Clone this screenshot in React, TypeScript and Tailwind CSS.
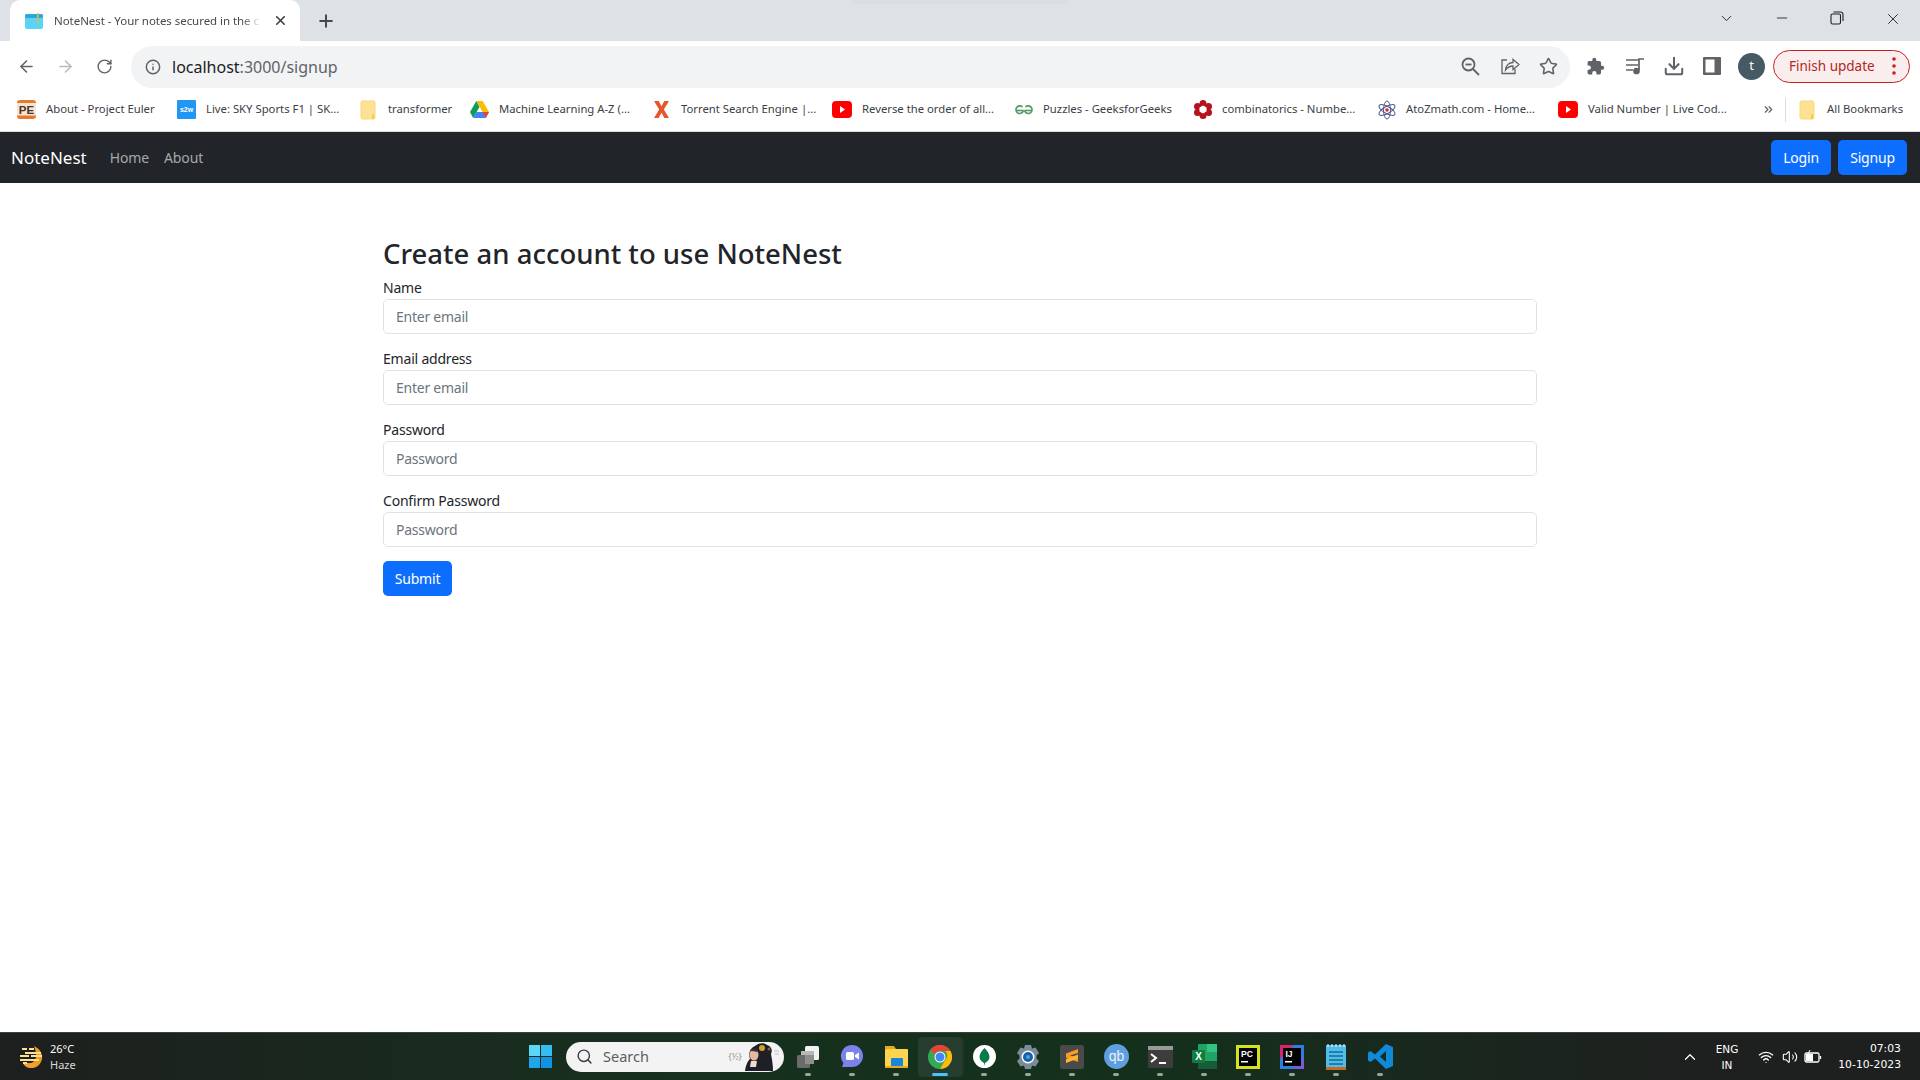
import React from "react";
import { ArrowLeft, ArrowRight, RotateCw, Info, Star, Download, ChevronDown, ChevronUp, Minus, X, Plus, Search, Wifi, Volume2, ChevronsRight } from "lucide-react";

const ui = "font-['Noto_Sans','Open_Sans',sans-serif]";

function Folder() {
  return (
    <svg width="16" height="20" viewBox="0 0 16 20">
      <path d="M1 2.500a1.500 1.500 0 0 1 1.500-1.500h11a1.500 1.500 0 0 1 1.500 1.500v15a1.500 1.500 0 0 1-1.500 1.500h-11a1.500 1.500 0 0 1-1.500-1.500z" fill="#fde293" stroke="#f9d976" />
      <path d="M12 19v-4a1 1 0 0 1 2 0v4z" fill="#f6c84c" />
    </svg>
  );
}
function PE() {
  return (
    <svg width="19" height="19" viewBox="0 0 19 19">
      <rect width="19" height="19" rx="3" fill="#e8782c" />
      <rect y="3" width="19" height="12.500" fill="#f6e5d5" />
      <text x="9.500" y="14" textAnchor="middle" fontSize="11.500" fontWeight="800" fontFamily="Liberation Sans" fill="#4b3327">PE</text>
    </svg>
  );
}
function S2W() {
  return (
    <svg width="19" height="19" viewBox="0 0 19 19">
      <rect width="19" height="19" rx="1" fill="#2196f3" />
      <text x="9.500" y="12" textAnchor="middle" fontSize="7" fontWeight="700" fontFamily="Liberation Sans" fill="#fff">s2w</text>
    </svg>
  );
}
function Drive() {
  return (
    <svg width="19" height="17" viewBox="0 0 19 17">
      <path d="M6.300 0h6.400l6.300 11h-6.400z" fill="#fbbc04" />
      <path d="M6.300 0L0 11l3.200 6 6.300-11z" fill="#0f9d58" />
      <path d="M3.200 17L6.400 11H19l-3.200 6z" fill="#4285f4" />
      <path d="M12.600 11H19l-3.200 6z" fill="#ea4335" />
    </svg>
  );
}
function XLogo() {
  return (
    <svg width="15" height="17" viewBox="0 0 16 18">
      <path d="M0 0h5l3 5.500L11 0h5l-5.500 9 5.500 9h-5l-3-5.500L5 18H0l5.500-9z" fill="#e5562a" />
    </svg>
  );
}
function YT() {
  return (
    <svg width="20" height="17" viewBox="0 0 20 17">
      <rect width="20" height="17" rx="4" fill="#ff0000" />
      <path d="M8 5l5 3.500-5 3.500z" fill="#fff" />
    </svg>
  );
}
function GfG() {
  return (
    <svg width="18" height="12" viewBox="0 0 18 12" fill="none" stroke="#4f9a61" strokeWidth="1.600">
      <path d="M8.500 6.500H1.200" />
      <path d="M9.500 6.500h7.300" />
      <path d="M7.500 3A3.800 3.800 0 1 0 8.500 6.500" />
      <path d="M10.500 3A3.800 3.800 0 1 1 9.500 6.500" />
    </svg>
  );
}
function Combi() {
  return (
    <svg width="18" height="19" viewBox="0 0 18 19">
      <g fill="#b5121b">
        <circle cx="9" cy="3.500" r="3.500" />
        <circle cx="9" cy="15.500" r="3.500" />
        <circle cx="3.500" cy="6.500" r="3.500" />
        <circle cx="14.500" cy="6.500" r="3.500" />
        <circle cx="3.500" cy="12.500" r="3.500" />
        <circle cx="14.500" cy="12.500" r="3.500" />
      </g>
      <path d="M9 5.500l3.500 2v4l-3.500 2-3.500-2v-4z" fill="#fff" />
    </svg>
  );
}
function Atom() {
  return (
    <svg width="18" height="20" viewBox="0 0 18 20" fill="none" stroke="#53598f" strokeWidth="1">
      <ellipse cx="9" cy="10" rx="3.500" ry="9" />
      <ellipse cx="9" cy="10" rx="3.500" ry="9" transform="rotate(60 9 10)" />
      <ellipse cx="9" cy="10" rx="3.500" ry="9" transform="rotate(-60 9 10)" />
      <circle cx="9" cy="10" r="1.700" fill="#d3222a" stroke="none" />
    </svg>
  );
}

const bookmarks = [
  { icon: <PE />, t: "About - Project Euler", c: "w-[160px] pl-[17px]", g: "w-[29px]" },
  { icon: <S2W />, t: "Live: SKY Sports F1 | SK...", c: "w-[183px] pl-[17px]", g: "w-[29px]" },
  { icon: <Folder />, t: "transformer", c: "w-[110px] pl-[17px]", g: "w-[28px]" },
  { icon: <Drive />, t: "Machine Learning A-Z (...", c: "w-[185px] pl-[17px]", g: "w-[29px]" },
  { icon: <XLogo />, t: "Torrent Search Engine |...", c: "w-[178px] pl-[16px]", g: "w-[27px]" },
  { icon: <YT />, t: "Reverse the order of all...", c: "w-[182px] pl-[16px]", g: "w-[30px]" },
  { icon: <GfG />, t: "Puzzles - GeeksforGeeks", c: "w-[179px] pl-[17px]", g: "w-[28px]" },
  { icon: <Combi />, t: "combinatorics - Numbe...", c: "w-[184px] pl-[17px]", g: "w-[28px]" },
  { icon: <Atom />, t: "AtoZmath.com - Home...", c: "w-[180px] pl-[17px]", g: "w-[28px]" },
  { icon: <YT />, t: "Valid Number | Live Cod...", c: "w-[192px] pl-[17px]", g: "w-[30px]" },
];

function Field({ label, placeholder, type, last }: { label: string; placeholder: string; type: string; last?: boolean }) {
  return (
    <div className={last ? "mb-[14px]" : "mb-[12px]"}>
      <label className="block h-[24px] pt-[1px] text-[14px] leading-[24px] tracking-[-0.2px] text-[#212529]">{label}</label>
      <input
        type={type}
        placeholder={placeholder}
        className="block h-[35px] w-full rounded-[5px] border border-[#dee2e6] bg-white px-[12px] pb-[1px] text-[14px] tracking-[-0.25px] text-[#212529] placeholder:text-[#6c757d] outline-none"
      />
    </div>
  );
}

function TaskIcon({ children, active }: { children: React.ReactNode; active?: boolean }) {
  return (
    <div className={`relative flex h-[40px] w-[44px] shrink-0 items-center justify-center ${active ? "rounded-[4px] bg-[#263d30] shadow-[3px_0_0_-1px_#1f3528]" : ""}`}>
      {children}
      <div className={`absolute bottom-[1px] h-[3px] rounded-full ${active ? "w-[16px] bg-[#4cc2ff]" : "w-[6px] bg-[#9aa39d]"}`} />
    </div>
  );
}

export default function App() {
  return (
    <div className={`flex h-[1080px] w-[1920px] flex-col overflow-hidden bg-white ${ui}`}>
      {/* tab strip */}
      <div className="relative flex h-[41px] shrink-0 items-end bg-[#dee1e6]">
        <div className="absolute left-[850px] top-0 h-[4px] w-[220px] rounded-b-full bg-[#dadde2]" />
        <div className="ml-[10px] flex h-[41px] w-[290px] items-center rounded-t-[10px] bg-white pl-[15px]">
          <svg width="18" height="16" viewBox="0 0 18 16">
            <rect y="1" width="18" height="15" rx="2" fill="#5bd3f5" />
            <rect y="1" width="18" height="4" rx="1.500" fill="#29a9d8" />
            <rect x="12" y="0" width="1.500" height="10" fill="#e8b93a" />
          </svg>
          <span className="ml-[11px] w-[208px] whitespace-nowrap text-[11.500px] tracking-[-0.05px] text-[#45494e] [mask-image:linear-gradient(to_right,black_90%,transparent)]">
            NoteNest - Your notes secured in the c
          </span>
          <X size={15} strokeWidth={2.600} className="ml-[11px] text-[#3c4043]" />
        </div>
        <div className="ml-[16px] flex h-[41px] items-center">
          <Plus size={20} strokeWidth={2.400} className="text-[#45494e]" />
        </div>
        <div className="flex-1" />
        <div className="flex h-[41px] items-start pt-[10px] text-[#202124]">
          <ChevronDown size={17} strokeWidth={1.300} className="mr-[39px]" />
          <Minus size={16} strokeWidth={1.300} className="mr-[40px]" />
          <svg width="14" height="14" viewBox="0 0 14 14" fill="none" stroke="#202124" strokeWidth="1.100" className="mr-[40px] mt-[1px]">
            <rect x="1" y="3" width="9.500" height="10" rx="1.500" />
            <path d="M3.500 1h7a2.500 2.500 0 0 1 2.500 2.500V10" />
          </svg>
          <X size={18} strokeWidth={1.200} className="mr-[18px]" />
        </div>
      </div>

      {/* toolbar */}
      <div className="flex h-[47px] shrink-0 items-end">
        <div className="flex h-[42px] w-[131px] shrink-0 items-center pb-[1px] pl-[17px]">
          <ArrowLeft size={19} className="text-[#5f6368]" />
          <ArrowRight size={19} className="ml-[20px] text-[#b9bbbe]" />
          <RotateCw size={17} className="ml-[21px] text-[#5f6368]" />
        </div>
        <div className="flex h-[42px] w-[1439px] shrink-0 items-center rounded-full bg-[#f1f3f4] pl-[14px]">
          <Info size={16} strokeWidth={2.200} className="text-[#5f6368]" />
          <span className="ml-[11px] text-[16px] text-[#5f6368]">
            <span className="text-[#202124]">localhost</span>:3000/signup
          </span>
          <div className="flex-1" />
          <div className="mb-[2px] flex items-center">
            <ZoomOutIcon />
            <svg width="20" height="20" viewBox="0 0 20 20" fill="none" stroke="#5f6368" strokeWidth="1.300" className="ml-[20px]">
              <path d="M7 4H2v13.500h13V13" />
              <path d="M5.500 14c.5-4.500 3.500-7.500 7.500-7.500V3.500L19 8.500 13 13.500V10c-3 0-5.500 1.500-7.500 4z" />
            </svg>
            <Star size={19} strokeWidth={2} className="ml-[19px] text-[#5f6368]" />
          </div>
          <div className="w-[12px]" />
        </div>
        <div className="flex h-[42px] flex-1 items-center pb-[2px] pl-[16px]">
          <svg width="19" height="19" viewBox="0 0 24 24" fill="#5f6368">
            <path d="M20.500 11H19V7a2 2 0 0 0-2-2h-4V3.500a2.500 2.500 0 0 0-5 0V5H4a2 2 0 0 0-2 2v3.800h1.500a2.700 2.700 0 0 1 0 5.400H2V20a2 2 0 0 0 2 2h3.800v-1.500a2.700 2.700 0 0 1 5.400 0V22H17a2 2 0 0 0 2-2v-4h1.500a2.500 2.500 0 0 0 0-5z" />
          </svg>
          <svg width="20" height="18" viewBox="0 0 20 18" fill="none" stroke="#5f6368" strokeWidth="1.700" className="ml-[20px]">
            <path d="M1 3h12M1 8h12M1 13h7" />
            <path d="M14 13V2h5" />
            <circle cx="11.500" cy="14" r="2.500" fill="#5f6368" />
          </svg>
          <Download size={22} strokeWidth={2.200} className="ml-[18px] text-[#5f6368]" />
          <svg width="18" height="18" viewBox="0 0 18 18" className="ml-[18px]">
            <rect width="18" height="18" rx="1" fill="#5f6368" />
            <rect x="2.500" y="2.500" width="9" height="13" fill="#fff" />
          </svg>
          <div className="ml-[17px] flex h-[27px] w-[27px] items-center justify-center rounded-full bg-[#455a64] text-[13px] text-white">t</div>
          <div className="ml-[8px] flex h-[33px] w-[137px] items-center rounded-full border border-[#c5221f] bg-[#faeded] pl-[15px] text-[13.500px] text-[#b3261e]">
            Finish update
            <svg width="4" height="18" viewBox="0 0 4 18" className="ml-[17px]" fill="#c5221f">
              <circle cx="2" cy="2" r="1.800" />
              <circle cx="2" cy="9" r="1.800" />
              <circle cx="2" cy="16" r="1.800" />
            </svg>
          </div>
        </div>
      </div>

      {/* bookmarks */}
      <div className="flex h-[44px] shrink-0 items-center border-b border-[#dadce0]">
        {bookmarks.map((b) => (
          <div key={b.t + b.c} className={`flex shrink-0 items-center ${b.c}`}>
            <div className={`flex shrink-0 items-center ${b.g}`}>{b.icon}</div>
            <span className="whitespace-nowrap text-[11.300px] text-[#3c4043]">{b.t}</span>
          </div>
        ))}
        <ChevronsRight size={13} strokeWidth={2.200} className="ml-[29px] text-[#5f6368]" />
        <div className="ml-[10px] h-[24px] w-px bg-[#dadce0]" />
        <div className="ml-[13px]"><Folder /></div>
        <span className="ml-[12px] whitespace-nowrap text-[11.300px] text-[#3c4043]">All Bookmarks</span>
      </div>

      {/* navbar */}
      <nav className="flex h-[51px] shrink-0 items-center bg-[#212529] pl-[11px] pr-[13px]">
        <span className="text-[17px] text-white">NoteNest</span>
        <span className="ml-[23px] text-[14px] tracking-[-0.15px] text-[#a6a8aa]">Home</span>
        <span className="ml-[15px] text-[14px] tracking-[-0.1px] text-[#a6a8aa]">About</span>
        <div className="flex-1" />
        <button className="h-[35px] w-[60px] rounded-[5px] bg-[#0d6efd] text-[14px] tracking-[-0.2px] text-white">Login</button>
        <button className="ml-[7px] h-[35px] w-[69px] rounded-[5px] bg-[#0d6efd] text-[14px] tracking-[-0.2px] text-white">Signup</button>
      </nav>

      {/* page */}
      <main className="flex-1 bg-white">
        <div className="mx-auto w-[1154px] pt-[51px]">
          <h2 className="mb-[1px] h-[40px] text-[27.500px] font-medium leading-[40px] text-[#212529]">Create an account to use NoteNest</h2>
          <Field label="Name" placeholder="Enter email" type="text" />
          <Field label="Email address" placeholder="Enter email" type="email" />
          <Field label="Password" placeholder="Password" type="password" />
          <Field label="Confirm Password" placeholder="Password" type="password" last />
          <button className="h-[35px] w-[69px] rounded-[5px] bg-[#0d6efd] text-[14px] tracking-[-0.2px] text-white">Submit</button>
        </div>
      </main>

      {/* taskbar */}
      <footer className="flex h-[48px] shrink-0 items-center border-t border-[#3a423d] bg-[linear-gradient(to_right,#1d1f1e,#17301f_35%,#14301c_60%,#1e201f_88%)] text-white">
        <div className="flex w-[518px] shrink-0 items-center pl-[20px]">
          <svg width="23" height="22" viewBox="0 0 23 22">
            <path d="M14 0c6 3 9 8 8 13-1 5-5 9-10 9-4 0-8-2-9-5h6c4 0 6-2 7-6 .5-3-.5-7-2-11z" fill="#f09a20" />
            <path d="M3 17h15c-1.500 3-4 5-7 5-3.500 0-6.500-2-8-5z" fill="#f0a02c" />
            <path d="M2 3h5M9 3h5M5 7h16M0 10h9M11 10h11M0 14h19M3 17h4" stroke="#ffdf94" strokeWidth="2" />
          </svg>
          <div className="ml-[7px] text-[11px] leading-[16px]">
            <div>26°C</div>
            <div className="text-[#d7dad8]">Haze</div>
          </div>
        </div>
        <div className="flex h-[40px] w-[44px] shrink-0 items-center justify-center">
          <svg width="23" height="23" viewBox="0 0 23 23">
            <rect width="11" height="11" fill="#5bd6f8" />
            <rect x="12" width="11" height="11" fill="#35bdf2" />
            <rect y="12" width="11" height="11" fill="#1fa5ea" />
            <rect x="12" y="12" width="11" height="11" fill="#1193e4" />
          </svg>
        </div>
        <div className="ml-[4px] flex h-[30px] w-[218px] shrink-0 items-center rounded-full bg-[#f3f3f3] pl-[10px] text-[#3c3c3c]">
          <Search size={17} strokeWidth={2} />
          <span className="ml-[10px] text-[14.500px] text-[#5d5d5d]">Search</span>
          <div className="flex-1" />
          <span className="mr-[1px] text-[9px] text-[#999]">{"{½}"}</span>
          <svg width="38" height="29" viewBox="0 0 38 29" className="mr-[3px]">
            <path d="M2 29c1-7 3-10 5-12-2-5 0-11 5-13 3-3 9-4 12-1 4 1 6 5 4 9 1 5 2 11 2 17z" fill="#1e1f27" />
            <ellipse cx="11" cy="13" rx="4.500" ry="5.500" fill="#e4b8a2" />
            <path d="M7 9c2-3 6-3 8-1l-1 2c-2-1-5-1-7-1z" fill="#40302b" />
            <path d="M8 19h6l-1 6H7z" fill="#ecdcd3" />
            <circle cx="19" cy="6" r="3" fill="#c9a52f" />
            <circle cx="26" cy="7" r="1.500" fill="#7d6a33" />
            <path d="M31 9h5M32 12h4" stroke="#bbb" strokeWidth="1" />
          </svg>
        </div>
        <div className="ml-[2px] flex items-center">
          <TaskIcon>
            <svg width="24" height="24" viewBox="0 0 24 24">
              <rect x="9" y="1" width="14" height="14" rx="1.500" fill="#f2f2f2" />
              <rect x="5" y="6" width="13" height="13" fill="#b8b8b8" />
              <rect x="1" y="10" width="13" height="13" rx="1.500" fill="#6b6b6b" />
              <rect x="9" y="10" width="9" height="9" fill="#8f8f8f" />
            </svg>
          </TaskIcon>
          <TaskIcon>
            <svg width="24" height="26" viewBox="0 0 24 26">
              <path d="M12 1a11 11 0 0 1 0 22H2l1.500-4A11 11 0 0 1 12 1z" fill="#7b83eb" />
              <rect x="6" y="8" width="8" height="8" rx="1.500" fill="#fff" />
              <path d="M15 11l4-2.500v7L15 13z" fill="#fff" />
            </svg>
          </TaskIcon>
          <TaskIcon>
            <svg width="25" height="24" viewBox="0 0 25 24">
              <path d="M1 1h9l2 3h-11z" fill="#e8a91a" />
              <rect x="1" y="4" width="23" height="19" rx="1" fill="#ffd44f" />
              <rect x="7" y="13" width="12" height="10" rx="1" fill="#1687d9" />
              <rect x="1" y="21" width="23" height="2" fill="#e8a91a" />
            </svg>
          </TaskIcon>
          <TaskIcon active>
            <svg width="24" height="24" viewBox="0 0 24 24">
              <circle cx="12" cy="12" r="12" fill="#34a853" />
              <path d="M12 0a12 12 0 0 1 10.400 6H12a6 6 0 0 0-5.400 3.400L2.500 4.600A12 12 0 0 1 12 0z" fill="#ea4335" />
              <path d="M22.400 6A12 12 0 0 1 12 24l5.200-9a6 6 0 0 0 0-9z" fill="#fbbc05" />
              <circle cx="12" cy="12" r="5.500" fill="#fff" />
              <circle cx="12" cy="12" r="4.500" fill="#4285f4" />
            </svg>
          </TaskIcon>
          <TaskIcon>
            <svg width="23" height="23" viewBox="0 0 23 23">
              <circle cx="11.500" cy="11.500" r="11.500" fill="#fff" />
              <path d="M11.500 3c3 3 5 6 5 9 0 3-2.500 5-4.500 6l-.500 3-.500-3c-2-1-4.500-3-4.500-6 0-3 2-6 5-9z" fill="#0b7a4b" />
            </svg>
          </TaskIcon>
          <TaskIcon>
            <svg width="24" height="24" viewBox="0 0 24 24">
              <path d="M9 0h6l1 3.500 3.500-1L23 8l-2.500 2.500V13.500L23 16l-3.500 5.500-3.500-1L15 24H9l-1-3.500-3.500 1L1 16l2.500-2.500V10.500L1 8l3.500-5.500 3.500 1z" fill="#7c8b98" />
              <circle cx="12" cy="12" r="6.500" fill="#fff" />
              <circle cx="12" cy="12" r="5" fill="#1561a8" />
              <circle cx="12" cy="12" r="2" fill="#4e9ee0" />
            </svg>
          </TaskIcon>
          <TaskIcon>
            <svg width="24" height="24" viewBox="0 0 24 24">
              <rect width="24" height="24" rx="2" fill="#4a4a4a" />
              <path d="M18 4L6 8.500v4L18 17v-4L10 10.500 18 8z" fill="#f89b27" />
              <path d="M18 9.500L6 14v4l12-4.500z" fill="#fdb52c" />
            </svg>
          </TaskIcon>
          <TaskIcon>
            <svg width="25" height="25" viewBox="0 0 25 25">
              <circle cx="12.500" cy="12.500" r="12.500" fill="#5f9fe0" />
              <text x="12.500" y="17" textAnchor="middle" fontSize="14" fontFamily="Liberation Sans" fill="#e8f2fb">qb</text>
            </svg>
          </TaskIcon>
          <TaskIcon>
            <svg width="25" height="22" viewBox="0 0 25 22">
              <rect width="25" height="22" rx="1.500" fill="#3d3d3d" />
              <rect width="25" height="4" fill="#9a9a9a" />
              <path d="M3 8l5 4-5 4" fill="none" stroke="#fff" strokeWidth="2" />
              <path d="M11 17h7" stroke="#fff" strokeWidth="2" />
            </svg>
          </TaskIcon>
          <TaskIcon>
            <svg width="25" height="25" viewBox="0 0 25 25">
              <rect x="6" y="0" width="19" height="25" rx="1" fill="#21a366" />
              <rect x="15" y="0" width="10" height="8" fill="#33c481" />
              <rect x="6" y="17" width="19" height="8" fill="#185c37" />
              <rect x="0" y="6" width="13" height="13" rx="1" fill="#107c41" />
              <text x="6.500" y="16" textAnchor="middle" fontSize="10" fontWeight="700" fontFamily="Liberation Sans" fill="#fff">X</text>
            </svg>
          </TaskIcon>
          <TaskIcon>
            <svg width="24" height="24" viewBox="0 0 24 24">
              <rect width="24" height="24" fill="#d7e022" />
              <rect x="3" y="3" width="18" height="18" fill="#000" />
              <text x="5" y="12" fontSize="8.500" fontWeight="700" fontFamily="Liberation Sans" fill="#fff">PC</text>
              <rect x="5" y="16" width="7" height="1.500" fill="#fff" />
            </svg>
          </TaskIcon>
          <TaskIcon>
            <svg width="24" height="24" viewBox="0 0 24 24">
              <rect width="24" height="24" fill="#2f7de0" />
              <path d="M0 0h14L0 14z" fill="#d6246e" />
              <path d="M24 24H12L24 12z" fill="#7c5cd6" />
              <rect x="3" y="3" width="18" height="18" fill="#000" />
              <text x="5.500" y="12" fontSize="8.500" fontWeight="700" fontFamily="Liberation Sans" fill="#fff">IJ</text>
              <rect x="5" y="16" width="7" height="1.500" fill="#fff" />
            </svg>
          </TaskIcon>
          <TaskIcon>
            <svg width="20" height="26" viewBox="0 0 20 26">
              <rect y="1" width="20" height="24" rx="1" fill="#53bde8" />
              <rect y="23" width="20" height="3" fill="#c76a1f" />
              <path d="M3 8h14M3 12h14M3 16h14M3 20h14" stroke="#0d6e98" strokeWidth="1.500" />
              <path d="M2 0v3M6 0v3M10 0v3M14 0v3M18 0v3" stroke="#fff" strokeWidth="1" />
            </svg>
          </TaskIcon>
          <TaskIcon>
            <svg width="25" height="25" viewBox="0 0 25 25">
              <path d="M18 0l7 3v19l-7 3L7 14.500 2.500 18 0 16.500v-8L2.500 7 7 10.500zM18 7l-6 5.500 6 5.500z" fill="#0f8ad9" />
            </svg>
          </TaskIcon>
        </div>
        <div className="flex-1" />
        <div className="flex items-center pr-[19px] text-[11px] leading-[16px]">
          <ChevronUp size={18} strokeWidth={1.600} className="mr-[14px]" />
          <div className="w-[28px] text-center font-['DejaVu_Sans',sans-serif] text-[10.500px]">
            <div>ENG</div>
            <div>IN</div>
          </div>
          <Wifi size={16} strokeWidth={2} className="ml-[17px]" />
          <Volume2 size={16} strokeWidth={1.600} className="ml-[8px]" />
          <svg width="18" height="14" viewBox="0 0 18 14" fill="none" stroke="#fff" strokeWidth="1.300" className="ml-[6px]">
            <rect x="1" y="3" width="14" height="9" rx="1.500" />
            <path d="M16.500 6v3" />
            <path d="M2 4h7v7H2z" fill="#fff" stroke="none" />
            <path d="M6 0L3.500 5h3L4 9" stroke="#fff" strokeWidth="1" />
          </svg>
          <div className="ml-[9px] w-[70px] whitespace-nowrap text-right font-['DejaVu_Sans',sans-serif] text-[10.800px]">
            <div>07:03</div>
            <div>10-10-2023</div>
          </div>
        </div>
      </footer>
    </div>
  );
}

function ZoomOutIcon() {
  return (
    <svg width="19" height="19" viewBox="0 0 19 19" fill="none" stroke="#5f6368" strokeWidth="1.800">
      <circle cx="7.500" cy="7.500" r="6" />
      <path d="M12 12l6 6" />
      <path d="M4.500 7.500h6" />
    </svg>
  );
}
